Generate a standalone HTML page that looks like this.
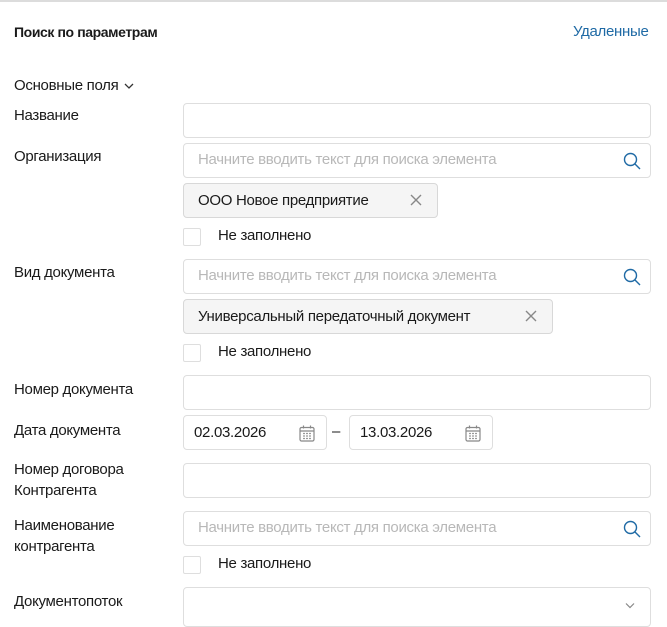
<!DOCTYPE html>
<html><head><meta charset="utf-8"><style>
*{box-sizing:border-box;margin:0;padding:0}
body{width:667px;height:624px;overflow:hidden;background:#fff;font-family:"Liberation Sans",sans-serif;color:#1a1a1a;position:relative}
.a{position:absolute}
.lbl{position:absolute;left:14px;font-size:15px;letter-spacing:-0.3px;line-height:21px;color:#1a1a1a}
.in{position:absolute;left:183px;width:468px;height:35px;border:1px solid #dedede;border-radius:4px;background:#fff}
.ph{position:absolute;left:14px;top:7px;font-size:15px;letter-spacing:-0.3px;color:#b8b8b8}
.chip{position:absolute;left:183px;height:35px;border:1px solid #d8d8d8;border-radius:4px;background:#f5f5f5;font-size:15px;letter-spacing:-0.3px;padding:8px 0 0 14px}
.chip .x{position:absolute;right:14px;top:9px}
.cb{position:absolute;left:183px;width:18px;height:18px;border:1px solid #dedede;border-radius:2px}
.cbt{position:absolute;left:218px;font-size:15px;letter-spacing:-0.3px}
.srch{position:absolute;right:9px;top:8px}
.date{position:absolute;top:415px;width:144px;height:35px;border:1px solid #dedede;border-radius:4px;font-size:15px;letter-spacing:-0.3px;padding:8px 0 0 10px}
.cal{position:absolute;right:11px;top:9px}
</style></head><body>
<div class="a" style="left:0;top:0;width:667px;height:2px;background:#dcdcdc"></div>
<div class="a" style="left:14px;top:24px;font-size:14px;font-weight:bold;letter-spacing:-0.4px">Поиск по параметрам</div>
<div class="a" style="left:573px;top:23px;font-size:15px;letter-spacing:-0.3px;color:#1f6aa5">Удаленные</div>
<div class="lbl" style="top:75px">Основные поля <svg width="10" height="8" viewBox="0 0 10 8" style="margin-left:2px"><path d="M1 2l4 4 4-4" stroke="#333" stroke-width="1.3" fill="none"/></svg></div>

<div class="lbl" style="top:105px">Название</div>
<div class="in" style="top:103px"></div>

<div class="lbl" style="top:146px">Организация</div>
<div class="in" style="top:143px"><span class="ph">Начните вводить текст для поиска элемента</span>
<svg class="srch" width="18" height="18" viewBox="0 0 18 18"><circle cx="7.5" cy="7.5" r="6" stroke="#1f6aa5" stroke-width="1.4" fill="none"/><path d="M12 12l5 5" stroke="#1f6aa5" stroke-width="1.4"/></svg></div>
<div class="chip" style="top:183px;width:255px">ООО Новое предприятие<svg class="x" width="14" height="14" viewBox="0 0 14 14"><path d="M2 2l10 10M12 2L2 12" stroke="#888" stroke-width="1.4"/></svg></div>
<div class="cb" style="top:228px"></div><div class="cbt" style="top:227px">Не заполнено</div>

<div class="lbl" style="top:262px">Вид документа</div>
<div class="in" style="top:259px"><span class="ph">Начните вводить текст для поиска элемента</span>
<svg class="srch" width="18" height="18" viewBox="0 0 18 18"><circle cx="7.5" cy="7.5" r="6" stroke="#1f6aa5" stroke-width="1.4" fill="none"/><path d="M12 12l5 5" stroke="#1f6aa5" stroke-width="1.4"/></svg></div>
<div class="chip" style="top:299px;width:370px">Универсальный передаточный документ<svg class="x" width="14" height="14" viewBox="0 0 14 14"><path d="M2 2l10 10M12 2L2 12" stroke="#888" stroke-width="1.4"/></svg></div>
<div class="cb" style="top:344px"></div><div class="cbt" style="top:343px">Не заполнено</div>

<div class="lbl" style="top:379px">Номер документа</div>
<div class="in" style="top:375px"></div>

<div class="lbl" style="top:420px">Дата документа</div>
<div class="date" style="left:183px">02.03.2026<svg class="cal" width="16" height="17" viewBox="0 0 16 17"><rect x="1" y="2.5" width="14" height="13.5" rx="1.5" stroke="#888" stroke-width="1.2" fill="none"/><path d="M1 6h14M4.5 0.5v3M11.5 0.5v3" stroke="#888" stroke-width="1.2"/><path d="M4 8.5h2M7 8.5h2M10 8.5h2M4 11h2M7 11h2M10 11h2M4 13.5h2M7 13.5h2M10 13.5h2" stroke="#999" stroke-width="1.2"/></svg></div>
<div class="a" style="left:332px;top:423px;font-size:15px">–</div>
<div class="date" style="left:349px">13.03.2026<svg class="cal" width="16" height="17" viewBox="0 0 16 17"><rect x="1" y="2.5" width="14" height="13.5" rx="1.5" stroke="#888" stroke-width="1.2" fill="none"/><path d="M1 6h14M4.5 0.5v3M11.5 0.5v3" stroke="#888" stroke-width="1.2"/><path d="M4 8.5h2M7 8.5h2M10 8.5h2M4 11h2M7 11h2M10 11h2M4 13.5h2M7 13.5h2M10 13.5h2" stroke="#999" stroke-width="1.2"/></svg></div>

<div class="lbl" style="top:459px">Номер договора<br>Контрагента</div>
<div class="in" style="top:463px"></div>

<div class="lbl" style="top:515px">Наименование<br>контрагента</div>
<div class="in" style="top:511px"><span class="ph">Начните вводить текст для поиска элемента</span>
<svg class="srch" width="18" height="18" viewBox="0 0 18 18"><circle cx="7.5" cy="7.5" r="6" stroke="#1f6aa5" stroke-width="1.4" fill="none"/><path d="M12 12l5 5" stroke="#1f6aa5" stroke-width="1.4"/></svg></div>
<div class="cb" style="top:556px"></div><div class="cbt" style="top:555px">Не заполнено</div>

<div class="lbl" style="top:591px">Документопоток</div>
<div class="in" style="top:587px;height:40px"><svg class="a" style="right:15px;top:14px" width="10" height="7" viewBox="0 0 10 7"><path d="M1 1.5l4 4 4-4" stroke="#888" stroke-width="1.2" fill="none"/></svg></div>
</body></html>
